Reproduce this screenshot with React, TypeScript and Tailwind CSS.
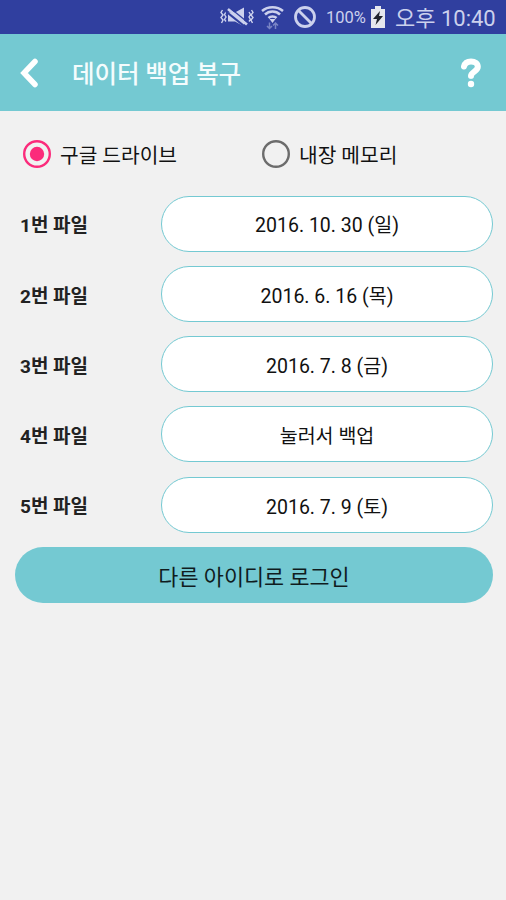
import { useState } from "react";

interface BackupFile {
  id: number;
  name: string;
  label: string;
}

const files: BackupFile[] = [
  { id: 1, name: "1번 파일", label: "2016. 10. 30 (일)" },
  { id: 2, name: "2번 파일", label: "2016. 6. 16 (목)" },
  { id: 3, name: "3번 파일", label: "2016. 7. 8 (금)" },
  { id: 4, name: "4번 파일", label: "눌러서 백업" },
  { id: 5, name: "5번 파일", label: "2016. 7. 9 (토)" },
];

function StatusBar() {
  return (
    <div className="flex h-[34px] items-center bg-[#303f9f] pl-[220px] text-[#ccd1ed]">
      {/* vibrate / muted */}
      <svg width="34" height="22" viewBox="0 0 34 22" fill="none" stroke="currentColor">
        <path d="M2.500 4l-1.500 2.500 2 2.500-2 2.500 2 2.500-1.500 3M6 6l-1.500 2.500 1.500 2.500-1.500 2.500 1.500 2M29 6l1.500 2.500-1.500 2.500 1.500 2.500-1.500 2M31.500 4l1.500 2.500-2 2.500 2 2.500-2 2.500 1.500 3" strokeWidth="1.400" />
        <path d="M8 6.500h7l9-5v19l-9-5H8z" fill="currentColor" stroke="none" />
        <path d="M6 5.500l20 16" stroke="#303f9f" strokeWidth="2.200" />
        <path d="M8 3l19 15.500" strokeWidth="2.800" />
        <path d="M9.500 1.500l19 15.500" stroke="#303f9f" strokeWidth="1.200" />
      </svg>
      <svg className="ml-[6px]" width="25" height="26" viewBox="0 0 25 26" fill="none" stroke="currentColor">
        <path d="M2 7c6-5 15-5 21 0M5 10.500c4-4 11-4 15 0M8.500 14c2-2 6-2 8 0" strokeWidth="2.500" />
        <path d="M9.500 15h6l-3 4z" fill="currentColor" stroke="none" />
        <path d="M9.500 18.500v6M7 22l2.500 2.500L12 22M15.500 25v-6M13 21.500l2.500-2.500 2.500 2.500" stroke="#7984c5" strokeWidth="1.500" />
      </svg>
      <svg className="ml-[9px]" width="22" height="22" viewBox="0 0 22 22" fill="none" stroke="currentColor" strokeWidth="2.800">
        <circle cx="11" cy="11" r="9.500" />
        <path d="M4.500 4.500l13 13" />
      </svg>
      <span className="ml-[10px] w-[43px] whitespace-nowrap pt-[3px] text-[16.500px]">100%</span>
      <svg className="ml-px" width="16" height="24" viewBox="0 0 16 24">
        <path d="M5 1h6v3h4v19H1V4h4z" fill="#e6e7ee" />
        <path d="M10 6l-7 8h4L5.500 20l7.500-9H9z" fill="#20232c" />
      </svg>
      <span className="ml-[9px] whitespace-nowrap pt-[3px] text-[22px] leading-[31px]">오후 10:40</span>
    </div>
  );
}

function Header() {
  return (
    <header className="flex h-[77px] items-center bg-[#74c9d2] text-[#f4fcfd]">
      <button className="ml-[19px]">
        <svg width="20" height="30" viewBox="0 0 20 30" fill="none" stroke="#fff" strokeWidth="5.500">
          <path d="M16 3.500L5 15l11 11.500" strokeLinecap="round" />
        </svg>
      </button>
      <h1 className="ml-[33px] pt-1.5 text-[24.500px] font-medium tracking-[-0.1px]">데이터 백업 복구</h1>
      <button className="mr-[24px] ml-auto">
        <svg width="22" height="32" viewBox="0 0 22 32" fill="none" stroke="#fff">
          <path d="M4 9.500c1-4 3.500-5 7-5 4 0 6.800 1.800 6.800 5.300 0 4.500-6.800 5-6.800 9.200" strokeWidth="6" strokeLinecap="round" />
          <path d="M7 22.700h8" stroke="#74c9d2" strokeWidth="1.600" />
          <circle cx="11" cy="27" r="3.200" fill="#fff" stroke="none" />
        </svg>
      </button>
    </header>
  );
}

interface RadioProps {
  text: string;
  checked: boolean;
  onSelect: () => void;
}

function Radio({ text, checked, onSelect }: RadioProps) {
  return (
    <button onClick={onSelect} className="flex w-[239px] items-center gap-[9px] text-[20.300px] text-[#111]">
      <svg width="28" height="28" viewBox="0 0 28 28" fill="none">
        <circle cx="14" cy="14" r="12.800" stroke={checked ? "#fb2b7b" : "#6c6c6c"} strokeWidth="2.400" />
        {checked && <circle cx="14" cy="14" r="7.200" fill="#fb2b7b" />}
      </svg>
      <span className="pt-[5px]">{text}</span>
    </button>
  );
}

export default function App() {
  const [storage, setStorage] = useState<"drive" | "memory">("drive");

  return (
    <div className="h-[900px] w-[506px] overflow-hidden bg-[#f1f1f1] font-[Roboto,'Noto_Sans_CJK_KR',sans-serif]">
      <StatusBar />
      <Header />

      <div className="mt-[27px] flex h-[32px] items-center pl-[23px]">
        <Radio text="구글 드라이브" checked={storage === "drive"} onSelect={() => setStorage("drive")} />
        <Radio text="내장 메모리" checked={storage === "memory"} onSelect={() => setStorage("memory")} />
      </div>

      <main className="mt-[25.500px] flex flex-col gap-[14.300px] pr-[13px] pl-[15px]">
        {files.map((file) => (
          <div key={file.id} className="flex h-[56px] items-center">
            <span className="w-[146px] pt-1.5 pl-[5px] text-[19px] font-bold text-[#222]">{file.name}</span>
            <button className="h-full flex-1 rounded-full border-[1.500px] border-[#74c9d2] bg-white pt-[5px] text-[19.500px] text-[#111]">
              {file.label}
            </button>
          </div>
        ))}
        <button className="h-[56px] rounded-full bg-[#74c9d2] pt-1.5 text-[21.800px] text-[#101c1e]">
          다른 아이디로 로그인
        </button>
      </main>
    </div>
  );
}
